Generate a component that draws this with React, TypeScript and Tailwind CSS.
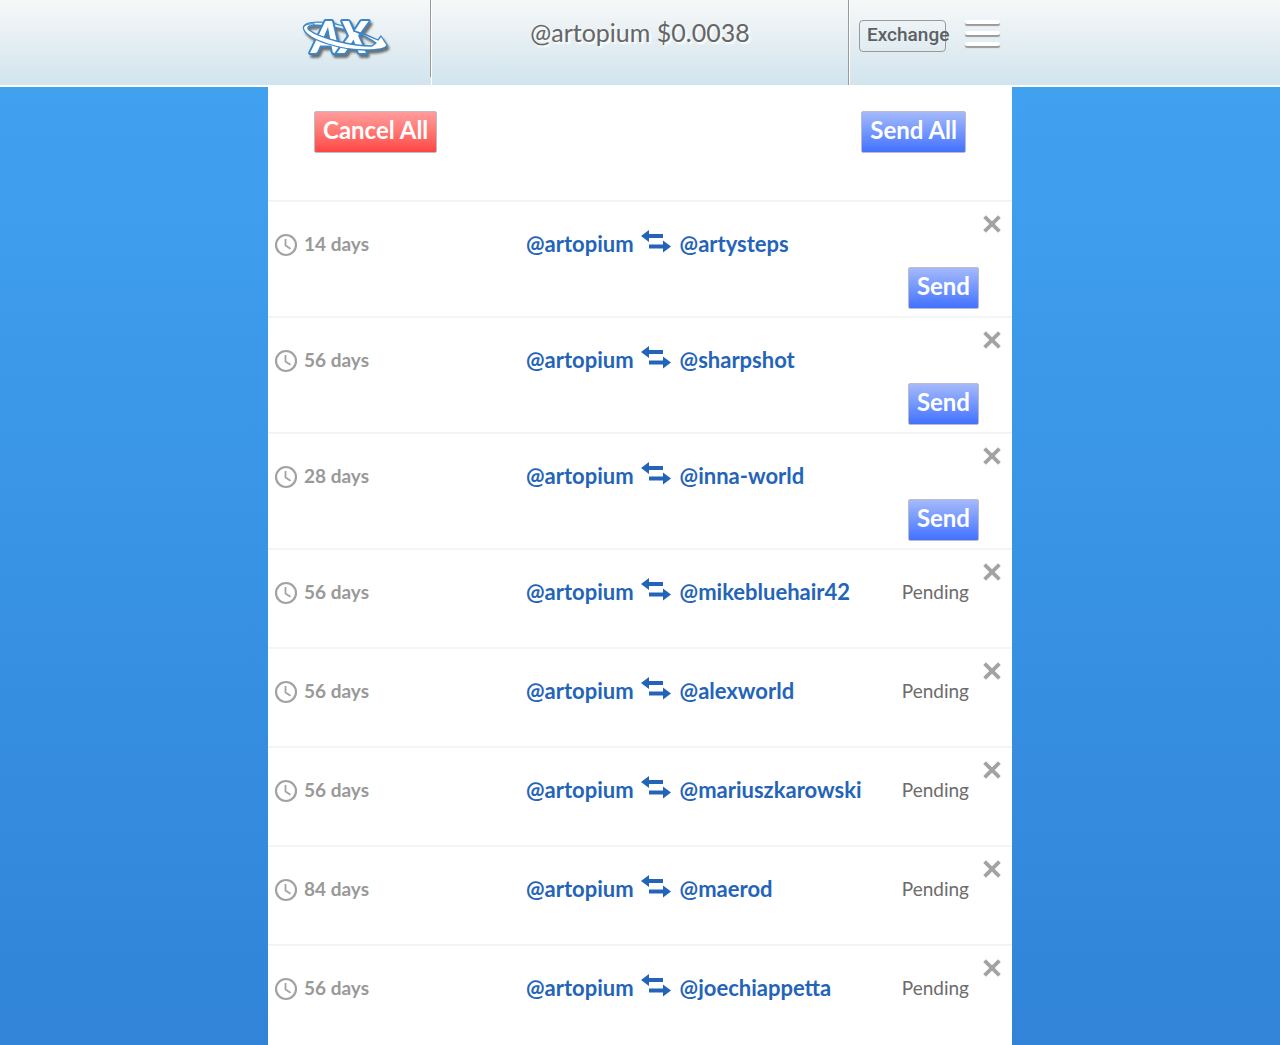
type Swap = { days: number; partner: string; pending: boolean };

const OWNER = "@artopium";

const swaps: Swap[] = [
  { days: 14, partner: "@artysteps", pending: false },
  { days: 56, partner: "@sharpshot", pending: false },
  { days: 28, partner: "@inna-world", pending: false },
  { days: 56, partner: "@mikebluehair42", pending: true },
  { days: 56, partner: "@alexworld", pending: true },
  { days: 56, partner: "@mariuszkarowski", pending: true },
  { days: 84, partner: "@maerod", pending: true },
  { days: 56, partner: "@joechiappetta", pending: true },
];

function Logo() {
  return (
    <svg
      width="96"
      height="70"
      viewBox="0 0 96 70"
      role="img"
      aria-label="AX"
      className="overflow-visible drop-shadow-[2px_3px_1px_rgba(60,60,60,0.7)]"
    >
      <path d="M50 26 C32 19 6 17 5 24" fill="none" stroke="#3b86c8" strokeWidth="4.5" />
      <path d="M50 26 C32 19 6 17 5 24" fill="none" stroke="#e6f2fb" strokeWidth="2" />
      <g
        fontFamily="Lato, sans-serif"
        fontWeight="900"
        fontStyle="italic"
        fontSize="44"
        fill="#ffffff"
        stroke="#3b86c8"
        strokeWidth="4"
        strokeLinejoin="round"
        style={{ paintOrder: "stroke" }}
      >
        <text x="12" y="49">A</text>
        <text x="39" y="49">X</text>
      </g>
      <path
        d="M14 20 C6 19 2 22 4 26 C9 36 40 46 66 46 C76 46 86 45 87 41 L81 32 L78 36 C70 32 62 29 54 27 C63 31 71 35 76 39 L72 42 C50 42 20 34 9 26 C6 23 9 21 14 22 Z"
        fill="#ffffff"
        stroke="#3b86c8"
        strokeWidth="1.3"
        strokeLinejoin="round"
      />
    </svg>
  );
}

function ClockIcon() {
  return (
    <svg width="24" height="24" viewBox="0 0 24 24" fill="none" stroke="#a2a2a2" aria-hidden="true">
      <circle cx="12" cy="12" r="10" strokeWidth="2.2" />
      <path d="M11.5 6v6.5l5 3.2" strokeWidth="1.8" />
    </svg>
  );
}

function SwapIcon() {
  return (
    <svg width="32" height="24" viewBox="0 0 32 24" fill="#2464b8" aria-label="exchanges with" role="img">
      <path d="M0 6 8 0v4.1h14v3.8H8V12z" />
      <path d="M30 16.5 22 10.5v4.1H8v3.8h14v4.1z" />
    </svg>
  );
}

function CloseIcon() {
  return (
    <svg width="18" height="18" viewBox="0 0 18 18" stroke="#a3a3a3" strokeWidth="3.8" aria-hidden="true">
      <path d="M1.6 1.6l14.8 14.8M16.4 1.6L1.6 16.4" />
    </svg>
  );
}

const buttonBase =
  "h-[42px] rounded-[2px] border border-[#bcbcc8] px-2 pb-1 text-2xl leading-8 font-bold text-white";
const blue = "bg-linear-to-b from-[#a5b9fb] to-[#4370ff]";
const red = "bg-linear-to-b from-[#ff9c9c] to-[#ff4343]";

function MenuBar() {
  return <span className="h-1 w-full rounded-xs bg-white shadow-[0_2px_1px_#999]" />;
}

function Header() {
  return (
    <header className="border-b-2 border-white bg-linear-to-b from-[#f7f8f8] to-[#d1e4ed]">
      <div className="mx-auto flex h-[85px] max-w-[744px]">
        <a href="#home" className="h-[77px] w-[163px] shrink-0 border-r border-[#999] pt-1 pl-8">
          <Logo />
        </a>
        <div className="flex-1 border-l border-white pt-4 text-center text-[25px] leading-8 text-[#666] [text-shadow:2px_2px_2px_#fff]">
          @artopium $0.0038
        </div>
        <div className="flex w-[164px] shrink-0 items-start border-l border-[#999] pt-5 shadow-[inset_1px_0_0_#fff]">
          <button
            type="button"
            className="ml-2.5 h-8 w-[87px] rounded-sm border border-[#999] pb-0.5 pl-[7px] text-left font-[Roboto] text-[19px] leading-7 font-medium text-[#5c6165]"
          >
            Exchange
          </button>
          <button type="button" aria-label="Menu" className="ml-[19px] flex w-[35px] flex-col gap-[7px]">
            <MenuBar />
            <MenuBar />
            <MenuBar />
          </button>
        </div>
      </div>
    </header>
  );
}

function SwapRow({ swap }: { swap: Swap }) {
  return (
    <li className={`flex border-t-2 border-[#f3f4f5] ${swap.pending ? "h-[99px]" : "h-[116px]"}`}>
      <div className="flex w-[258px] shrink-0 items-start gap-[6px] pt-7 pl-1.5 text-[19px] leading-7 font-bold text-[#999]">
        <span className="pt-[3px]">
          <ClockIcon />
        </span>
        {swap.days} days
      </div>
      <div className="flex flex-1 items-start gap-[7px] pt-7 text-[22px] leading-7 font-bold text-[#2464b8]">
        <a href="#owner">{OWNER}</a>
        <SwapIcon />
        <a href="#partner">{swap.partner}</a>
      </div>
      {swap.pending ? (
        <span className="pt-7 pr-[10px] text-[19px] leading-7 text-[#6c6c6c]">Pending</span>
      ) : (
        <div className="pt-[65px]">
          <button type="button" className={`${buttonBase} ${blue}`}>
            Send
          </button>
        </div>
      )}
      <div className="w-[33px] shrink-0 pt-[13px] pl-1">
        <button type="button" aria-label={`Cancel ${swap.partner}`} className="block">
          <CloseIcon />
        </button>
      </div>
    </li>
  );
}

export default function App() {
  return (
    <div className="flex min-h-screen flex-col bg-linear-to-b from-[#42a4f2] to-[#3184d8] font-[Lato,sans-serif]">
      <Header />
      <main className="mx-auto w-full max-w-[744px] flex-1 bg-white">
        <div className="flex h-[113px] items-start justify-between px-[46px] pt-6">
          <button type="button" className={`${buttonBase} ${red}`}>
            Cancel All
          </button>
          <button type="button" className={`${buttonBase} ${blue}`}>
            Send All
          </button>
        </div>
        <ul>
          {swaps.map((swap) => (
            <SwapRow key={swap.partner} swap={swap} />
          ))}
        </ul>
      </main>
    </div>
  );
}
